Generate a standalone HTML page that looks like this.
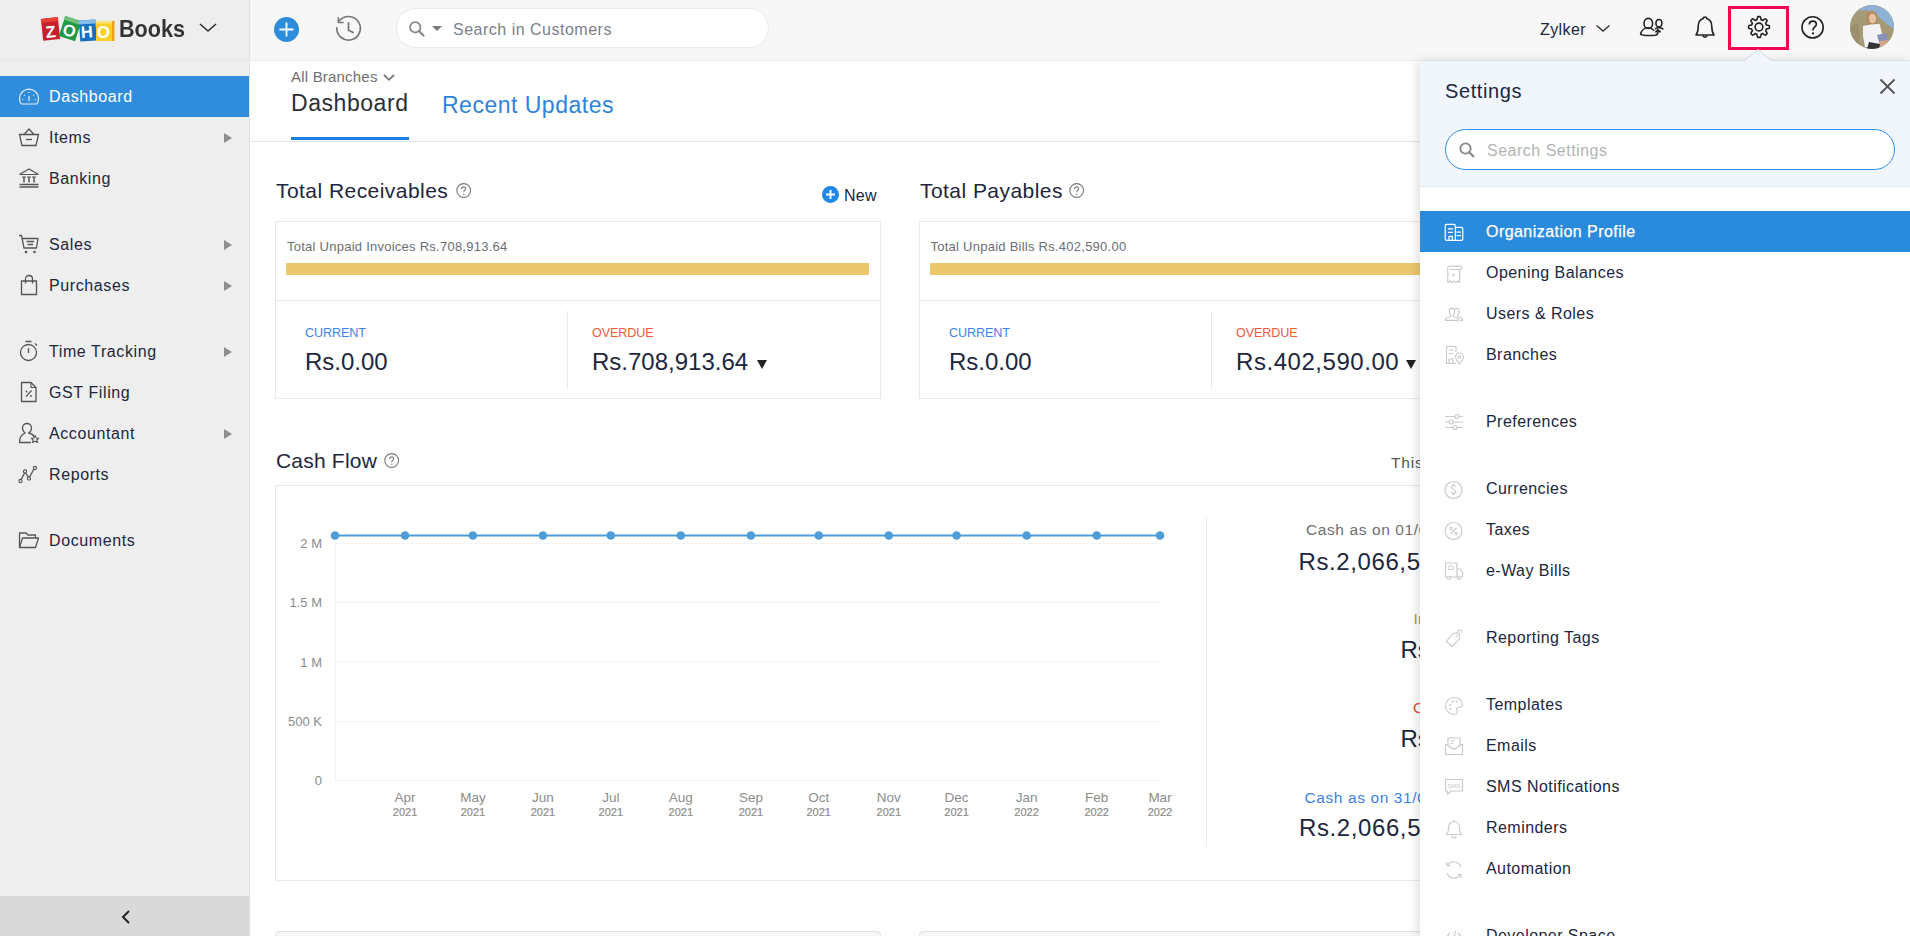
<!DOCTYPE html>
<html><head><meta charset="utf-8">
<style>
*{box-sizing:border-box;margin:0;padding:0}
html,body{width:1910px;height:936px;overflow:hidden;background:#fff;font-family:"Liberation Sans",sans-serif;color:#21263c}
.a{position:absolute;line-height:1;white-space:nowrap}
svg{position:absolute;overflow:visible}
#side{position:absolute;left:0;top:0;width:250px;height:936px;background:#eeeeee;border-right:1px solid #e2e2e2}
#sidehead{position:absolute;left:0;top:0;width:249px;height:61px;border-bottom:1px solid #e6e6e6}
.nav{position:absolute;left:0;width:249px;height:41px}
.nav .t{position:absolute;left:49px;top:13px;font-size:16px;line-height:16px;letter-spacing:0.6px;color:#21263c;white-space:nowrap}
.nav svg{left:18px;top:10px}
.nav .arr{position:absolute;left:224px;top:16px;width:0;height:0;border-left:8px solid #8e8e8e;border-top:5px solid transparent;border-bottom:5px solid transparent}
.nav.act{background:#2f8ddb}
.nav.act .t{color:#fff}
#collapse{position:absolute;left:0;top:896px;width:249px;height:40px;background:#d9d9d9}
#top{position:absolute;left:250px;top:0;width:1660px;height:61px;background:#f7f7f7;border-bottom:1px solid #ebebeb}
#main{position:absolute;left:250px;top:61px;width:1660px;height:875px;background:#fff}
#panel{position:absolute;left:1420px;top:61px;width:490px;height:875px;background:#fff;box-shadow:-3px 0 10px rgba(0,0,0,0.13)}
#phead{position:absolute;left:0;top:0;width:490px;height:126px;background:#f1f6fd;border-bottom:1px solid #e6e9ee}
.si{position:absolute;left:0;width:490px;height:41px}
.si .t{position:absolute;left:66px;top:13px;font-size:16px;line-height:16px;letter-spacing:0.45px;color:#21263c;white-space:nowrap}
.si svg{left:24px;top:11px}
.si.act{background:#2a8bdc}
.si.act .t{color:#fff;-webkit-text-stroke:0.25px #fff}
</style></head>
<body>
<div id="side">
  <div id="sidehead">
    <!-- zoho logo -->
    <svg style="left:41px;top:14px" width="76" height="28" viewBox="0 0 76 28">
      <g transform="rotate(-6 9 15)"><rect x="1" y="4" width="17" height="22" fill="#c8202f"/><rect x="1" y="4" width="17" height="4" fill="#e84235"/></g>
      <g transform="rotate(18 29 15)"><rect x="20.5" y="4" width="17" height="21" fill="#1f9a45"/><rect x="20.5" y="4" width="17" height="4" fill="#72bf80"/></g>
      <g transform="rotate(-4 47 16)"><rect x="38.5" y="6" width="16.5" height="21" fill="#1770c0"/><rect x="38.5" y="6" width="16.5" height="4" fill="#84bdea"/></g>
      <rect x="55" y="7" width="18" height="20" fill="#fcd02a"/><rect x="55" y="7" width="18" height="2.5" fill="#fde57a"/><rect x="71" y="7" width="2.5" height="20" fill="#eda21c"/>
      <g font-family="Liberation Sans" font-weight="700" font-size="16.5" fill="#fff" text-anchor="middle">
      <text x="9.5" y="23.5" transform="rotate(-6 9 15)">Z</text>
      <text x="28.8" y="22.3" transform="rotate(14 29 15)">O</text>
      <text x="45.8" y="23.5" transform="rotate(-4 47 16)">H</text>
      <text x="62.5" y="23.5">O</text></g>
    </svg>
    <div class="a" style="left:119px;top:17px;font-size:24px;font-weight:700;color:#333;transform:scaleX(0.9);transform-origin:0 0">Books</div>
    <svg style="left:199px;top:23px" width="18" height="9" viewBox="0 0 18 9"><path d="M1 1 L9 8 L17 1" fill="none" stroke="#333" stroke-width="1.6"/></svg>
  </div>
  <div class="nav act" style="top:76px"><svg style="left:18px;top:11px" width="22" height="19" viewBox="0 0 22 19"><path d="M3.2 17 A9.5 9.5 0 1 1 18.8 17 Z" fill="none" stroke="#e6f0fa" stroke-width="1.2" stroke-linejoin="round"/><path d="M11 5 V6 M6 8 L6.7 8.7 M16 8 L15.3 8.7 M4.2 12.5 H5.2 M16.8 12.5 H17.8 M11 9 V14" stroke="#e6f0fa" stroke-width="1.2"/></svg><span class="t">Dashboard</span></div>
  <div class="nav" style="top:117px"><svg style="left:18px;top:9px" width="22" height="22" viewBox="0 0 22 22"><path d="M1.5 8.5 H20.5 L18 19.5 H4 Z" fill="none" stroke="#555" stroke-width="1.3" stroke-linejoin="round"/><path d="M6 8.5 L11 3 L16 8.5" fill="none" stroke="#555" stroke-width="1.3"/><path d="M8 13.5 H14" stroke="#555" stroke-width="1.3"/></svg><span class="t">Items</span><span class="arr"></span></div>
  <div class="nav" style="top:158px"><svg style="left:18px;top:9px" width="22" height="22" viewBox="0 0 22 22"><path d="M1.5 7.5 L11 2 L20.5 7.5" fill="none" stroke="#555" stroke-width="1.3"/><path d="M2 7.5 H20" stroke="#555" stroke-width="1"/><path d="M6 10 V15.5 M11 10 V15.5 M16 10 V15.5" stroke="#555" stroke-width="1.5"/><path d="M4 10 H8 M9 10 H13 M14 10 H18" stroke="#555" stroke-width="1"/><path d="M1.5 17.5 H20.5 M1.5 20 H20.5" stroke="#555" stroke-width="1.3"/></svg><span class="t">Banking</span></div>
  <div class="nav" style="top:224px"><svg style="left:18px;top:9px" width="22" height="22" viewBox="0 0 22 22"><path d="M1 2.5 H3.5 L6 15 H18.5 L20 5.5 H4.5" fill="none" stroke="#555" stroke-width="1.3" stroke-linejoin="round"/><path d="M8.5 8.5 H16 M9.5 11.5 H15" stroke="#555" stroke-width="1.3"/><circle cx="8" cy="19" r="1.3" fill="#555"/><circle cx="16.5" cy="19" r="1.3" fill="#555"/></svg><span class="t">Sales</span><span class="arr"></span></div>
  <div class="nav" style="top:265px"><svg style="left:18px;top:9px" width="22" height="22" viewBox="0 0 22 22"><path d="M3.5 7 H18.5 V20.5 H3.5 Z" fill="none" stroke="#555" stroke-width="1.3"/><path d="M7.5 9.5 V5 C7.5 3 9 1.5 11 1.5 C13 1.5 14.5 3 14.5 5 V9.5" fill="none" stroke="#555" stroke-width="1.3"/></svg><span class="t">Purchases</span><span class="arr"></span></div>
  <div class="nav" style="top:331px"><svg style="left:18px;top:9px" width="22" height="22" viewBox="0 0 22 22"><circle cx="10.5" cy="12.5" r="8" fill="none" stroke="#555" stroke-width="1.3"/><path d="M7.5 1.5 H13.5 M10.5 8 V13 M17 3.5 L19 5.5" stroke="#555" stroke-width="1.3"/></svg><span class="t">Time Tracking</span><span class="arr"></span></div>
  <div class="nav" style="top:372px"><svg style="left:18px;top:9px" width="22" height="22" viewBox="0 0 22 22"><path d="M3.5 1.5 H13 L18 6.5 V20.5 H3.5 Z" fill="none" stroke="#555" stroke-width="1.3" stroke-linejoin="round"/><path d="M13 1.5 V6.5 H18" fill="none" stroke="#555" stroke-width="1.1"/><path d="M8 15.5 L13.5 9.5" stroke="#555" stroke-width="1.2"/><circle cx="8.5" cy="10.5" r="0.9" fill="#555"/><circle cx="13" cy="15" r="0.9" fill="#555"/></svg><span class="t">GST Filing</span></div>
  <div class="nav" style="top:413px"><svg style="left:18px;top:9px" width="22" height="22" viewBox="0 0 22 22"><path d="M7.5 11 C5.5 10 4.5 8 4.5 6 C4.5 3.3 6.5 1.5 9 1.5 C11.5 1.5 13.5 3.3 13.5 6 C13.5 8 12.5 10 10.5 11 C14 11.5 15.5 13 16 15 M13 20.5 H1.5 C1.5 15 4 12 7.5 11" fill="none" stroke="#555" stroke-width="1.3" stroke-linejoin="round"/><path d="M17 13.5 L18.2 16 L20.8 16.2 L18.8 18 L19.5 20.5 L17 19.2 L14.5 20.5 L15.2 18 L13.2 16.2 L15.8 16 Z" fill="none" stroke="#555" stroke-width="1.1" stroke-linejoin="round"/></svg><span class="t">Accountant</span><span class="arr"></span></div>
  <div class="nav" style="top:454px"><svg style="left:18px;top:9px" width="22" height="22" viewBox="0 0 22 22"><path d="M3 17 L7 9 L11 15 L16 6" fill="none" stroke="#555" stroke-width="1.3"/><circle cx="2.5" cy="18" r="1.6" fill="#eee" stroke="#555" stroke-width="1.1"/><circle cx="7" cy="8.5" r="1.6" fill="#eee" stroke="#555" stroke-width="1.1"/><circle cx="11" cy="15.5" r="1.6" fill="#eee" stroke="#555" stroke-width="1.1"/><circle cx="17" cy="5" r="1.6" fill="#eee" stroke="#555" stroke-width="1.1"/></svg><span class="t">Reports</span></div>
  <div class="nav" style="top:520px"><svg style="left:18px;top:9px" width="22" height="22" viewBox="0 0 22 22"><path d="M1.5 18.5 V4 H8 L10 6 H17.5 V9" fill="none" stroke="#555" stroke-width="1.3" stroke-linejoin="round"/><path d="M1.5 18.5 L4.5 9 H20.5 L17.5 18.5 Z" fill="none" stroke="#555" stroke-width="1.3" stroke-linejoin="round"/></svg><span class="t">Documents</span></div>
  <div id="collapse">
    <svg style="left:121px;top:14px" width="10" height="14" viewBox="0 0 10 14"><path d="M8 1 L2 7 L8 13" fill="none" stroke="#222" stroke-width="2"/></svg>
  </div>
</div>

<div id="top"></div>
<!-- topbar content -->
<svg style="left:274px;top:17px" width="25" height="25" viewBox="0 0 25 25"><circle cx="12.5" cy="12.5" r="12.5" fill="#2e8ddb"/><path d="M12.5 5.5 V19.5 M5.5 12.5 H19.5" stroke="#fff" stroke-width="1.8"/></svg>
<svg style="left:332px;top:12px" width="34" height="34" viewBox="0 0 34 34"><g fill="none" stroke="#767676" stroke-width="1.7"><path d="M7.2 9.1 A11.8 11.8 0 1 1 4.8 15.2"/><path d="M6.4 5.2 V10.5 H11.7"/><path d="M16.5 10.3 V18.3 L21.7 20.8"/></g></svg>
<div style="position:absolute;left:396px;top:8px;width:373px;height:40px;border-radius:20px;background:#fff;border:1px solid #ececec"></div>
<svg style="left:409px;top:21px" width="16" height="16" viewBox="0 0 16 16"><circle cx="6.3" cy="6.3" r="5.2" fill="none" stroke="#888" stroke-width="1.8"/><path d="M10 10 L14.5 14.5" stroke="#888" stroke-width="2.2" stroke-linecap="round"/></svg>
<svg style="left:432px;top:26px" width="10" height="5" viewBox="0 0 10 5"><path d="M0 0 H10 L5 5 Z" fill="#777"/></svg>
<div class="a" style="left:453px;top:21.5px;font-size:16px;color:#7a7f8a;letter-spacing:0.5px">Search in Customers</div>
<div class="a" style="left:1540px;top:21.5px;font-size:16px;color:#21263c;letter-spacing:0.4px">Zylker</div>
<svg style="left:1596px;top:25px" width="14" height="7" viewBox="0 0 14 7"><path d="M0.5 0.5 L7 6 L13.5 0.5" fill="none" stroke="#333" stroke-width="1.4"/></svg>
<svg style="left:1638px;top:17px" width="28" height="22" viewBox="0 0 28 22"><g fill="none" stroke="#222" stroke-width="1.6" stroke-linecap="round" stroke-linejoin="round"><ellipse cx="10.3" cy="6.4" rx="4.3" ry="5"/><path d="M15.8 13.3 C14 11.5 12 10.8 10.2 10.8 C6 10.8 3.2 14 2.6 17.4 C5 18.6 10 18.8 17 18.3 C19.2 18 20 16.5 20 14.2"/><ellipse cx="20.9" cy="6.2" rx="3" ry="3.7"/><path d="M17.6 11.6 C19 10.4 23 10.3 24.8 11.9"/><path d="M17.8 14.8 L20 12.8 L22.2 14.8"/></g></svg>
<svg style="left:1694px;top:15px" width="22" height="25" viewBox="0 0 22 25"><path d="M2 20 C3.5 18 4.2 16.5 4.2 11.5 C4.2 7.3 6.3 4.6 9.3 3.6 C9.2 1.4 12.8 1.4 12.7 3.6 C15.7 4.6 17.8 7.3 17.8 11.5 C17.8 16.5 18.5 18 20 20 Z" fill="none" stroke="#222" stroke-width="1.6" stroke-linejoin="round"/><path d="M8.8 20.5 A2.3 2.3 0 0 0 13.2 20.5" fill="none" stroke="#222" stroke-width="1.5"/></svg>
<div style="position:absolute;left:1728px;top:6px;width:61px;height:44px;border:3px solid #f5054f"></div>
<svg style="left:1747px;top:15.2px" width="24" height="24" viewBox="0 0 24 24"><path d="M22.40 12.00 L22.40 12.27 L22.39 12.54 L22.37 12.82 L22.34 13.09 L22.10 13.33 L21.59 13.52 L21.05 13.68 L20.50 13.81 L19.96 13.91 L19.45 14.00 L19.19 14.13 L19.13 14.32 L19.07 14.50 L19.00 14.69 L18.93 14.87 L18.85 15.05 L18.77 15.23 L18.68 15.40 L18.59 15.58 L18.68 15.86 L18.98 16.28 L19.29 16.73 L19.59 17.22 L19.86 17.71 L20.08 18.20 L20.08 18.54 L19.91 18.75 L19.73 18.96 L19.54 19.16 L19.35 19.35 L19.16 19.54 L18.96 19.73 L18.75 19.91 L18.54 20.08 L18.20 20.08 L17.71 19.86 L17.22 19.59 L16.73 19.29 L16.28 18.98 L15.86 18.68 L15.58 18.59 L15.40 18.68 L15.23 18.77 L15.05 18.85 L14.87 18.93 L14.69 19.00 L14.50 19.07 L14.32 19.13 L14.13 19.19 L14.00 19.45 L13.91 19.96 L13.81 20.50 L13.68 21.05 L13.52 21.59 L13.33 22.10 L13.09 22.34 L12.82 22.37 L12.54 22.39 L12.27 22.40 L12.00 22.40 L11.73 22.40 L11.46 22.39 L11.18 22.37 L10.91 22.34 L10.67 22.10 L10.48 21.59 L10.32 21.05 L10.19 20.50 L10.09 19.96 L10.00 19.45 L9.87 19.19 L9.68 19.13 L9.50 19.07 L9.31 19.00 L9.13 18.93 L8.95 18.85 L8.77 18.77 L8.60 18.68 L8.42 18.59 L8.14 18.68 L7.72 18.98 L7.27 19.29 L6.78 19.59 L6.29 19.86 L5.80 20.08 L5.46 20.08 L5.25 19.91 L5.04 19.73 L4.84 19.54 L4.65 19.35 L4.46 19.16 L4.27 18.96 L4.09 18.75 L3.92 18.54 L3.92 18.20 L4.14 17.71 L4.41 17.22 L4.71 16.73 L5.02 16.28 L5.32 15.86 L5.41 15.58 L5.32 15.40 L5.23 15.23 L5.15 15.05 L5.07 14.87 L5.00 14.69 L4.93 14.50 L4.87 14.32 L4.81 14.13 L4.55 14.00 L4.04 13.91 L3.50 13.81 L2.95 13.68 L2.41 13.52 L1.90 13.33 L1.66 13.09 L1.63 12.82 L1.61 12.54 L1.60 12.27 L1.60 12.00 L1.60 11.73 L1.61 11.46 L1.63 11.18 L1.66 10.91 L1.90 10.67 L2.41 10.48 L2.95 10.32 L3.50 10.19 L4.04 10.09 L4.55 10.00 L4.81 9.87 L4.87 9.68 L4.93 9.50 L5.00 9.31 L5.07 9.13 L5.15 8.95 L5.23 8.77 L5.32 8.60 L5.41 8.42 L5.32 8.14 L5.02 7.72 L4.71 7.27 L4.41 6.78 L4.14 6.29 L3.92 5.80 L3.92 5.46 L4.09 5.25 L4.27 5.04 L4.46 4.84 L4.65 4.65 L4.84 4.46 L5.04 4.27 L5.25 4.09 L5.46 3.92 L5.80 3.92 L6.29 4.14 L6.78 4.41 L7.27 4.71 L7.72 5.02 L8.14 5.32 L8.42 5.41 L8.60 5.32 L8.77 5.23 L8.95 5.15 L9.13 5.07 L9.31 5.00 L9.50 4.93 L9.68 4.87 L9.87 4.81 L10.00 4.55 L10.09 4.04 L10.19 3.50 L10.32 2.95 L10.48 2.41 L10.67 1.90 L10.91 1.66 L11.18 1.63 L11.46 1.61 L11.73 1.60 L12.00 1.60 L12.27 1.60 L12.54 1.61 L12.82 1.63 L13.09 1.66 L13.33 1.90 L13.52 2.41 L13.68 2.95 L13.81 3.50 L13.91 4.04 L14.00 4.55 L14.13 4.81 L14.32 4.87 L14.50 4.93 L14.69 5.00 L14.87 5.07 L15.05 5.15 L15.23 5.23 L15.40 5.32 L15.58 5.41 L15.86 5.32 L16.28 5.02 L16.73 4.71 L17.22 4.41 L17.71 4.14 L18.20 3.92 L18.54 3.92 L18.75 4.09 L18.96 4.27 L19.16 4.46 L19.35 4.65 L19.54 4.84 L19.73 5.04 L19.91 5.25 L20.08 5.46 L20.08 5.80 L19.86 6.29 L19.59 6.78 L19.29 7.27 L18.98 7.72 L18.68 8.14 L18.59 8.42 L18.68 8.60 L18.77 8.77 L18.85 8.95 L18.93 9.13 L19.00 9.31 L19.07 9.50 L19.13 9.68 L19.19 9.87 L19.45 10.00 L19.96 10.09 L20.50 10.19 L21.05 10.32 L21.59 10.48 L22.10 10.67 L22.34 10.91 L22.37 11.18 L22.39 11.46 L22.40 11.73Z" fill="none" stroke="#222" stroke-width="1.6" stroke-linejoin="round"/><circle cx="12" cy="12" r="3.9" fill="none" stroke="#222" stroke-width="1.6"/></svg>
<svg style="left:1801px;top:16px" width="24" height="24" viewBox="0 0 24 24"><circle cx="11.6" cy="11.4" r="10.6" fill="none" stroke="#222" stroke-width="1.6"/><path d="M8.3 8.6 C8.3 6.3 10 5.2 11.8 5.2 C13.8 5.2 15.3 6.5 15.3 8.4 C15.3 10.6 12.2 11.2 12 13.8 V14.5" fill="none" stroke="#222" stroke-width="1.7"/><circle cx="12" cy="17.4" r="1.1" fill="#222"/></svg>
<svg style="left:1850px;top:5.4px" width="44" height="44" viewBox="0 0 44 44"><defs><clipPath id="avc"><circle cx="22" cy="22" r="22"/></clipPath><filter id="avb"><feGaussianBlur stdDeviation="0.7"/></filter></defs><g clip-path="url(#avc)"><rect width="44" height="44" fill="#a49a76"/><g filter="url(#avb)"><path d="M8 0 H44 V24 L38 20 L31 14 L26 9 L16 5 L10 6 Z" fill="#8fb1d4"/><path d="M0 22 L8 18 L10 30 L6 44 H0 Z" fill="#9a9070"/><path d="M16 8 C18 5 25 5 27 9 L27.5 22 L16.5 22 Z" fill="#b48b62"/><ellipse cx="22.5" cy="13.5" rx="3.6" ry="4.8" fill="#e3c2a2"/><path d="M13 21 L21 19.5 L29.5 19 L32 28 L31.5 38 L22 42 L15 42 L13 31 Z" fill="#f3f3f6"/><path d="M27 30 L36 28 L39 36 L30 40 Z" fill="#8692b6"/><path d="M19 37 L30 39 L29 44 L17 44 Z" fill="#343438"/><path d="M30 36 L38 35 L38 41 L30 41 Z" fill="#d7a48a"/></g></g></svg>

<div id="main"></div>
<!-- tabs -->
<div class="a" style="left:291px;top:69px;font-size:15px;color:#6f6f6f;letter-spacing:0.2px">All Branches</div>
<svg style="left:383px;top:74px" width="12" height="7" viewBox="0 0 12 7"><path d="M1 1 L6 5.8 L11 1" fill="none" stroke="#777" stroke-width="1.8"/></svg>
<div class="a" style="left:291px;top:91.5px;font-size:23px;color:#2c2f36;letter-spacing:0.55px">Dashboard</div>
<div class="a" style="left:442px;top:94px;font-size:23px;color:#2f82dc;letter-spacing:0.5px">Recent Updates</div>
<div style="position:absolute;left:291px;top:137px;width:118px;height:3px;background:#1b7ee0"></div>
<div style="position:absolute;left:250px;top:141px;width:1170px;height:1px;background:#e6e6e6"></div>

<!-- receivables -->
<div class="a" style="left:276px;top:179.5px;font-size:21px;color:#21263c;letter-spacing:0.45px">Total Receivables</div>
<svg style="left:455.5px;top:183px" width="16" height="16" viewBox="0 0 16 16"><circle cx="7.7" cy="7.5" r="6.9" fill="none" stroke="#777" stroke-width="1.1"/><path d="M5.7 5.9 C5.7 4.6 6.6 3.9 7.7 3.9 C8.9 3.9 9.7 4.7 9.7 5.7 C9.7 7 8 7.3 7.8 8.8 V9.2" fill="none" stroke="#777" stroke-width="1.1"/><circle cx="7.8" cy="11.2" r="0.7" fill="#777"/></svg>
<svg style="left:821.5px;top:186px" width="17" height="17" viewBox="0 0 17 17"><circle cx="8.5" cy="8.5" r="8.5" fill="#1f87e5"/><path d="M8.5 4 V13 M4 8.5 H13" stroke="#fff" stroke-width="2"/></svg>
<div class="a" style="left:844px;top:187.5px;font-size:16px;color:#21263c;letter-spacing:0.3px">New</div>
<div style="position:absolute;left:275px;top:221px;width:606px;height:178px;border:1px solid #e8e8e8"></div>
<div style="position:absolute;left:276px;top:300px;width:604px;height:1px;background:#e8e8e8"></div>
<div class="a" style="left:287px;top:240px;font-size:13px;color:#6b6e76;letter-spacing:0.25px">Total Unpaid Invoices Rs.708,913.64</div>
<div style="position:absolute;left:286px;top:263px;width:583px;height:12px;background:#ebc86c"></div>
<div class="a" style="left:305px;top:327px;font-size:12.6px;color:#3d84ee;letter-spacing:-0.1px">CURRENT</div>
<div class="a" style="left:305px;top:350px;font-size:24px;color:#21263c">Rs.0.00</div>
<div style="position:absolute;left:567px;top:311px;width:1px;height:77px;background:#e8e8e8"></div>
<div class="a" style="left:592px;top:327px;font-size:12.6px;color:#f2583b;letter-spacing:-0.1px">OVERDUE</div>
<div class="a" style="left:592px;top:350px;font-size:24px;color:#21263c">Rs.708,913.64</div>
<svg style="left:757px;top:359.5px" width="10" height="9" viewBox="0 0 10 9"><path d="M0 0 H10 L5 9 Z" fill="#222"/></svg>

<!-- payables -->
<div class="a" style="left:920px;top:179.5px;font-size:21px;color:#21263c;letter-spacing:0.45px">Total Payables</div>
<svg style="left:1068.5px;top:183px" width="16" height="16" viewBox="0 0 16 16"><circle cx="7.7" cy="7.5" r="6.9" fill="none" stroke="#777" stroke-width="1.1"/><path d="M5.7 5.9 C5.7 4.6 6.6 3.9 7.7 3.9 C8.9 3.9 9.7 4.7 9.7 5.7 C9.7 7 8 7.3 7.8 8.8 V9.2" fill="none" stroke="#777" stroke-width="1.1"/><circle cx="7.8" cy="11.2" r="0.7" fill="#777"/></svg>
<div style="position:absolute;left:919px;top:221px;width:606px;height:178px;border:1px solid #e8e8e8"></div>
<div style="position:absolute;left:920px;top:300px;width:604px;height:1px;background:#e8e8e8"></div>
<div class="a" style="left:930.5px;top:240px;font-size:13px;color:#6b6e76;letter-spacing:0.25px">Total Unpaid Bills Rs.402,590.00</div>
<div style="position:absolute;left:930px;top:263px;width:583px;height:12px;background:#ebc86c"></div>
<div class="a" style="left:949px;top:327px;font-size:12.6px;color:#3d84ee;letter-spacing:-0.1px">CURRENT</div>
<div class="a" style="left:949px;top:350px;font-size:24px;color:#21263c">Rs.0.00</div>
<div style="position:absolute;left:1211px;top:311px;width:1px;height:77px;background:#e8e8e8"></div>
<div class="a" style="left:1236px;top:327px;font-size:12.6px;color:#f2583b;letter-spacing:-0.1px">OVERDUE</div>
<div class="a" style="left:1236px;top:350px;font-size:24px;color:#21263c;letter-spacing:0.55px">Rs.402,590.00</div>
<svg style="left:1406px;top:359.5px" width="10" height="9" viewBox="0 0 10 9"><path d="M0 0 H10 L5 9 Z" fill="#222"/></svg>

<!-- cash flow -->
<div class="a" style="left:276px;top:449.5px;font-size:21px;color:#21263c;letter-spacing:0.2px">Cash Flow</div>
<svg style="left:384px;top:453px" width="16" height="16" viewBox="0 0 16 16"><circle cx="7.7" cy="7.5" r="6.9" fill="none" stroke="#777" stroke-width="1.1"/><path d="M5.7 5.9 C5.7 4.6 6.6 3.9 7.7 3.9 C8.9 3.9 9.7 4.7 9.7 5.7 C9.7 7 8 7.3 7.8 8.8 V9.2" fill="none" stroke="#777" stroke-width="1.1"/><circle cx="7.8" cy="11.2" r="0.7" fill="#777"/></svg>
<div class="a" style="left:1391px;top:455px;font-size:15.5px;color:#555;letter-spacing:0.8px">This Fiscal Year</div>
<div style="position:absolute;left:275px;top:485px;width:1250px;height:396px;border:1px solid #e8e8e8"></div>
<div style="position:absolute;left:1206px;top:517px;width:1px;height:330px;background:#ebebeb"></div>
<svg style="left:0;top:0" width="1910" height="936" viewBox="0 0 1910 936" id="chart"><path d="M335 602.5 H1160" stroke="#f2f2f2" stroke-width="1"/><path d="M335 662 H1160" stroke="#f2f2f2" stroke-width="1"/><path d="M335 721.5 H1160" stroke="#f2f2f2" stroke-width="1"/><path d="M335 780.5 H1160" stroke="#f2f2f2" stroke-width="1"/><path d="M335 543.5 H1160" stroke="#ececec" stroke-width="1" stroke-dasharray="2 2"/><path d="M335.5 535 V780" stroke="#f4f4f4" stroke-width="1"/><text x="322" y="548.0" text-anchor="end" font-family="Liberation Sans" font-size="13" fill="#8c8c8c">2 M</text><text x="322" y="607.0" text-anchor="end" font-family="Liberation Sans" font-size="13" fill="#8c8c8c">1.5 M</text><text x="322" y="666.5" text-anchor="end" font-family="Liberation Sans" font-size="13" fill="#8c8c8c">1 M</text><text x="322" y="726.0" text-anchor="end" font-family="Liberation Sans" font-size="13" fill="#8c8c8c">500 K</text><text x="322" y="785.0" text-anchor="end" font-family="Liberation Sans" font-size="13" fill="#8c8c8c">0</text><text x="405.1" y="801.5" text-anchor="middle" font-family="Liberation Sans" font-size="13.5" fill="#8c8c8c">Apr</text><text x="405.1" y="815.5" text-anchor="middle" font-family="Liberation Sans" font-size="11" fill="#8c8c8c" stroke="#8c8c8c" stroke-width="0.2">2021</text><text x="472.9" y="801.5" text-anchor="middle" font-family="Liberation Sans" font-size="13.5" fill="#8c8c8c">May</text><text x="472.9" y="815.5" text-anchor="middle" font-family="Liberation Sans" font-size="11" fill="#8c8c8c" stroke="#8c8c8c" stroke-width="0.2">2021</text><text x="542.9" y="801.5" text-anchor="middle" font-family="Liberation Sans" font-size="13.5" fill="#8c8c8c">Jun</text><text x="542.9" y="815.5" text-anchor="middle" font-family="Liberation Sans" font-size="11" fill="#8c8c8c" stroke="#8c8c8c" stroke-width="0.2">2021</text><text x="610.8" y="801.5" text-anchor="middle" font-family="Liberation Sans" font-size="13.5" fill="#8c8c8c">Jul</text><text x="610.8" y="815.5" text-anchor="middle" font-family="Liberation Sans" font-size="11" fill="#8c8c8c" stroke="#8c8c8c" stroke-width="0.2">2021</text><text x="680.8" y="801.5" text-anchor="middle" font-family="Liberation Sans" font-size="13.5" fill="#8c8c8c">Aug</text><text x="680.8" y="815.5" text-anchor="middle" font-family="Liberation Sans" font-size="11" fill="#8c8c8c" stroke="#8c8c8c" stroke-width="0.2">2021</text><text x="750.9" y="801.5" text-anchor="middle" font-family="Liberation Sans" font-size="13.5" fill="#8c8c8c">Sep</text><text x="750.9" y="815.5" text-anchor="middle" font-family="Liberation Sans" font-size="11" fill="#8c8c8c" stroke="#8c8c8c" stroke-width="0.2">2021</text><text x="818.7" y="801.5" text-anchor="middle" font-family="Liberation Sans" font-size="13.5" fill="#8c8c8c">Oct</text><text x="818.7" y="815.5" text-anchor="middle" font-family="Liberation Sans" font-size="11" fill="#8c8c8c" stroke="#8c8c8c" stroke-width="0.2">2021</text><text x="888.8" y="801.5" text-anchor="middle" font-family="Liberation Sans" font-size="13.5" fill="#8c8c8c">Nov</text><text x="888.8" y="815.5" text-anchor="middle" font-family="Liberation Sans" font-size="11" fill="#8c8c8c" stroke="#8c8c8c" stroke-width="0.2">2021</text><text x="956.6" y="801.5" text-anchor="middle" font-family="Liberation Sans" font-size="13.5" fill="#8c8c8c">Dec</text><text x="956.6" y="815.5" text-anchor="middle" font-family="Liberation Sans" font-size="11" fill="#8c8c8c" stroke="#8c8c8c" stroke-width="0.2">2021</text><text x="1026.6" y="801.5" text-anchor="middle" font-family="Liberation Sans" font-size="13.5" fill="#8c8c8c">Jan</text><text x="1026.6" y="815.5" text-anchor="middle" font-family="Liberation Sans" font-size="11" fill="#8c8c8c" stroke="#8c8c8c" stroke-width="0.2">2022</text><text x="1096.7" y="801.5" text-anchor="middle" font-family="Liberation Sans" font-size="13.5" fill="#8c8c8c">Feb</text><text x="1096.7" y="815.5" text-anchor="middle" font-family="Liberation Sans" font-size="11" fill="#8c8c8c" stroke="#8c8c8c" stroke-width="0.2">2022</text><text x="1160.0" y="801.5" text-anchor="middle" font-family="Liberation Sans" font-size="13.5" fill="#8c8c8c">Mar</text><text x="1160.0" y="815.5" text-anchor="middle" font-family="Liberation Sans" font-size="11" fill="#8c8c8c" stroke="#8c8c8c" stroke-width="0.2">2022</text><path d="M335 535.5 H1160" stroke="#4e9dd8" stroke-width="1.8"/><circle cx="335.00" cy="535.5" r="4.3" fill="#4e9dd8"/><circle cx="405.07" cy="535.5" r="4.3" fill="#4e9dd8"/><circle cx="472.88" cy="535.5" r="4.3" fill="#4e9dd8"/><circle cx="542.95" cy="535.5" r="4.3" fill="#4e9dd8"/><circle cx="610.75" cy="535.5" r="4.3" fill="#4e9dd8"/><circle cx="680.82" cy="535.5" r="4.3" fill="#4e9dd8"/><circle cx="750.89" cy="535.5" r="4.3" fill="#4e9dd8"/><circle cx="818.70" cy="535.5" r="4.3" fill="#4e9dd8"/><circle cx="888.77" cy="535.5" r="4.3" fill="#4e9dd8"/><circle cx="956.58" cy="535.5" r="4.3" fill="#4e9dd8"/><circle cx="1026.64" cy="535.5" r="4.3" fill="#4e9dd8"/><circle cx="1096.71" cy="535.5" r="4.3" fill="#4e9dd8"/><circle cx="1160.00" cy="535.5" r="4.3" fill="#4e9dd8"/></svg>
<div class="a" style="left:1306px;top:522px;font-size:15.5px;color:#6f6f6f;letter-spacing:0.6px">Cash as on 01/04/2021</div>
<div class="a" style="left:1298.5px;top:550px;font-size:24px;color:#21263c;letter-spacing:0.6px">Rs.2,066,593.00</div>
<div class="a" style="left:1413.5px;top:611px;font-size:15.5px;color:#a8a71d;letter-spacing:0.3px">Incoming</div>
<div class="a" style="left:1400.5px;top:638px;font-size:24px;color:#21263c">Rs.0.00</div>
<div class="a" style="left:1413px;top:700px;font-size:15.5px;color:#e04a3a;letter-spacing:0.3px">Outgoing</div>
<div class="a" style="left:1400.5px;top:727px;font-size:24px;color:#21263c">Rs.0.00</div>
<div class="a" style="left:1304.5px;top:790px;font-size:15.5px;color:#3b82e6;letter-spacing:0.6px">Cash as on 31/03/2022</div>
<div class="a" style="left:1299px;top:816px;font-size:24px;color:#21263c;letter-spacing:0.6px">Rs.2,066,593.00</div>

<!-- bottom cards -->
<div style="position:absolute;left:275px;top:931px;width:606px;height:20px;border:1px solid #e0e0e0;border-radius:4px;background:#f7f7f7"></div>
<div style="position:absolute;left:919px;top:931px;width:606px;height:20px;border:1px solid #e0e0e0;border-radius:4px;background:#f7f7f7"></div>

<div id="panel">
  <div id="phead">
    <div class="a" style="left:25px;top:20px;font-size:20px;color:#21263c;letter-spacing:0.6px">Settings</div>
    <svg style="left:459px;top:17px" width="17" height="17" viewBox="0 0 17 17"><path d="M1.5 1.5 L15.5 15.5 M15.5 1.5 L1.5 15.5" stroke="#555" stroke-width="1.9"/></svg>
    <div style="position:absolute;left:25px;top:68px;width:450px;height:41px;border-radius:21px;background:#fff;border:1.5px solid #2c8ef2"></div>
    <svg style="left:39px;top:81px" width="16" height="16" viewBox="0 0 16 16"><circle cx="6.5" cy="6.5" r="5.2" fill="none" stroke="#888" stroke-width="1.8"/><path d="M10.2 10.2 L14.3 14.3" stroke="#888" stroke-width="2.2" stroke-linecap="round"/></svg>
    <div class="a" style="left:67px;top:81.5px;font-size:16px;color:#b3b3b3;letter-spacing:0.5px">Search Settings</div>
  </div>
<div class="si act" style="top:150px"><svg style="left:24px;top:12px" width="20" height="19" viewBox="0 0 20 19"><g fill="none" stroke="#fff" stroke-width="1.2" stroke-linejoin="round"><path d="M2.7 1.4 H9.8 Q11.3 1.4 11.3 2.9 V17.4 H2.7 Q1.2 17.4 1.2 15.9 V2.9 Q1.2 1.4 2.7 1.4 Z"/><path d="M11.3 4.3 H17.3 Q18.8 4.3 18.8 5.8 V15.9 Q18.8 17.4 17.3 17.4 H11.3"/><path d="M3.9 5.8 H9 M3.9 9.4 H9 M12.5 9.2 H17 M12.5 12.6 H17"/><path d="M5 17.4 V13.3 H8.3 V17.4"/></g></svg><span class="t">Organization Profile</span></div>
<div class="si" style="top:191px"><svg style="left:27px;top:13px" width="16" height="19" viewBox="0 0 16 19"><g fill="none" stroke="#c9c9c9" stroke-width="1.1" stroke-linejoin="round"><path d="M0.8 2.8 V17.5 L2.8 15.8 L4.8 17.5 L6.8 15.8 L8.8 17.5 L10.8 15.8 L12.6 17.5 V4.5"/><path d="M2.5 1.1 H13 A1.7 1.7 0 0 1 13 4.5 H2.6"/><path d="M2.5 1.1 A1.7 1.7 0 0 0 0.8 2.8"/><path d="M6.7 8.5 V11.5 M5.2 10 H8.2"/></g></svg><span class="t">Opening Balances</span></div>
<div class="si" style="top:232px"><svg style="left:24px;top:12px" width="20" height="18" viewBox="0 0 20 18"><g fill="none" stroke="#c9c9c9" stroke-width="1.15" stroke-linejoin="round"><path d="M7.9 3.4 C5.8 3.4 5.2 5 5.3 6.8 C5.4 8.7 6.2 9.8 6.9 10.3 C7.1 11.2 6.5 11.6 5.2 12 C2.5 12.7 1.3 13.8 1.3 15.3 H14.6 C14.6 13.8 13.2 12.7 10.8 12 C9.5 11.6 8.9 11.2 9.1 10.3 C9.9 9.8 10.5 8.7 10.6 6.8 C10.7 5 10 3.4 7.9 3.4 Z"/><path d="M10.9 4.3 C11.3 3.7 12 3.4 12.8 3.4 C14.5 3.4 15.2 5 15.1 6.8 C15 8.7 14.3 9.8 13.6 10.3 C13.4 11.2 14 11.6 15.2 12 C17.5 12.7 18.7 13.8 18.7 15.3 H16"/></g></svg><span class="t">Users &amp; Roles</span></div>
<div class="si" style="top:273px"><svg style="left:25px;top:11px" width="20" height="20" viewBox="0 0 20 20"><path d="M11 18.5 H1.5 V1.5 H11 V7" fill="none" stroke="#c9c9c9" stroke-width="1.15"/><path d="M4 5 H8 M4 8.5 H8 M4 18.5 V14 H8 V18.5" fill="none" stroke="#c9c9c9" stroke-width="1.2"/><path d="M14.5 19 C12 16 10.5 14 10.5 12 A4 4 0 0 1 18.5 12 C18.5 14 17 16 14.5 19 Z" fill="none" stroke="#c9c9c9" stroke-width="1.15"/><circle cx="14.5" cy="12" r="1.3" fill="none" stroke="#c9c9c9" stroke-width="1.1"/></svg><span class="t">Branches</span></div>
<div class="si" style="top:340px"><svg style="left:24px;top:13px" width="20" height="16" viewBox="0 0 20 16"><path d="M1 2.5 H11 M15 2.5 H19 M1 8 H5 M9 8 H19 M1 13.5 H9 M13 13.5 H19" stroke="#c9c9c9" stroke-width="1.15"/><circle cx="13" cy="2.5" r="2" fill="none" stroke="#c9c9c9" stroke-width="1.2"/><circle cx="7" cy="8" r="2" fill="none" stroke="#c9c9c9" stroke-width="1.2"/><circle cx="11" cy="13.5" r="2" fill="none" stroke="#c9c9c9" stroke-width="1.2"/></svg><span class="t">Preferences</span></div>
<div class="si" style="top:407px"><svg style="left:24px;top:12px" width="20" height="20" viewBox="0 0 20 20"><circle cx="9.5" cy="10" r="8.5" fill="none" stroke="#c9c9c9" stroke-width="1.15"/><path d="M11.7 7 C11.3 6 10.5 5.5 9.5 5.5 C8.3 5.5 7.4 6.2 7.4 7.3 C7.4 9.8 11.8 8.8 11.8 11.6 C11.8 12.8 10.8 13.6 9.5 13.6 C8.3 13.6 7.4 13 7.1 12 M9.5 4 V5.5 M9.5 13.6 V15.5" fill="none" stroke="#c9c9c9" stroke-width="1.2"/></svg><span class="t">Currencies</span></div>
<div class="si" style="top:448px"><svg style="left:24px;top:12px" width="20" height="20" viewBox="0 0 20 20"><circle cx="9.5" cy="10" r="8.5" fill="none" stroke="#c9c9c9" stroke-width="1.15"/><path d="M6.5 13 L12.5 7" stroke="#c9c9c9" stroke-width="1.15"/><circle cx="7" cy="7.5" r="1.3" fill="none" stroke="#c9c9c9" stroke-width="1.1"/><circle cx="12" cy="12.5" r="1.3" fill="none" stroke="#c9c9c9" stroke-width="1.1"/></svg><span class="t">Taxes</span></div>
<div class="si" style="top:489px"><svg style="left:24px;top:11px" width="20" height="20" viewBox="0 0 20 20"><path d="M13 16 H1.5 V2 H13 V16 M13 8 H16 L18.5 11.5 V16 H17" fill="none" stroke="#c9c9c9" stroke-width="1.15"/><circle cx="5" cy="17" r="1.5" fill="#fff" stroke="#c9c9c9" stroke-width="1.2"/><circle cx="15" cy="17" r="1.5" fill="#fff" stroke="#c9c9c9" stroke-width="1.2"/><path d="M4.5 8 A2.5 2.5 0 1 1 9 8.5 H4.5" fill="none" stroke="#c9c9c9" stroke-width="1"/></svg><span class="t">e-Way Bills</span></div>
<div class="si" style="top:556px"><svg style="left:24px;top:11px" width="20" height="20" viewBox="0 0 20 20"><g fill="none" stroke="#c9c9c9" stroke-width="1.1" stroke-linejoin="round"><path d="M8.4 6.4 Q9.2 5.3 10.5 5.2 L13.8 5 Q15.5 5 15.5 6.7 V10.9 L8 18.5 L2.2 13.5 Z"/><path d="M13.2 5.2 C13.5 2.8 14.8 2 15.9 2 C17 2 17.8 2.8 17.5 4.6"/></g><circle cx="13" cy="7.9" r="0.9" fill="#c9c9c9"/></svg><span class="t">Reporting Tags</span></div>
<div class="si" style="top:623px"><svg style="left:24px;top:12px" width="20" height="20" viewBox="0 0 20 20"><path d="M10 18.5 C5 18.5 1.5 14.5 1.5 10 C1.5 5 5.5 1.5 10 1.5 C14.5 1.5 18.5 4.5 18.5 8.5 C18.5 11 16.5 11.5 14.5 11.5 C12.5 11.5 12 13 13 14.5 C14 16.5 12.5 18.5 10 18.5 Z" fill="none" stroke="#c9c9c9" stroke-width="1.15"/><circle cx="6" cy="9" r="1.1" fill="#c9c9c9"/><circle cx="8.5" cy="5.5" r="1.1" fill="#c9c9c9"/><circle cx="12.5" cy="5.5" r="1.1" fill="#c9c9c9"/><circle cx="6.5" cy="13" r="1.1" fill="#c9c9c9"/></svg><span class="t">Templates</span></div>
<div class="si" style="top:664px"><svg style="left:24px;top:11px" width="20" height="20" viewBox="0 0 20 20"><path d="M1.5 8 V18.5 H18.5 V8" fill="none" stroke="#c9c9c9" stroke-width="1.15"/><path d="M1.5 8 L10 13.5 L18.5 8" fill="none" stroke="#c9c9c9" stroke-width="1.15"/><path d="M4 9.5 V2 H16 V9.5" fill="none" stroke="#c9c9c9" stroke-width="1.15"/><path d="M6.5 5 H11 M6.5 7.5 H9" stroke="#c9c9c9" stroke-width="1.2"/></svg><span class="t">Emails</span></div>
<div class="si" style="top:705px"><svg style="left:24px;top:12px" width="20" height="18" viewBox="0 0 20 18"><path d="M1.5 1.5 H18.5 V13 H7 L3.5 16.5 V13 H1.5 Z" fill="none" stroke="#c9c9c9" stroke-width="1.15" stroke-linejoin="round"/><text x="10" y="10" text-anchor="middle" font-family="Liberation Sans" font-size="6" fill="#c9c9c9">SMS</text></svg><span class="t">SMS Notifications</span></div>
<div class="si" style="top:746px"><svg style="left:25px;top:12px" width="18" height="20" viewBox="0 0 18 20"><path d="M1.5 15.5 C3 14 3.5 12.5 3.5 9 C3.5 5 6 2.5 9 2.5 C12 2.5 14.5 5 14.5 9 C14.5 12.5 15 14 16.5 15.5 Z" fill="none" stroke="#c9c9c9" stroke-width="1.15" stroke-linejoin="round"/><path d="M7 17 A2 2 0 0 0 11 17 M9 1 V2.5" fill="none" stroke="#c9c9c9" stroke-width="1.2"/></svg><span class="t">Reminders</span></div>
<div class="si" style="top:787px"><svg style="left:24px;top:12px" width="20" height="20" viewBox="0 0 20 20"><g transform="translate(20,0) scale(-1,1)"><path d="M3 7 A7.5 7.5 0 0 1 16.5 5.5" fill="none" stroke="#c9c9c9" stroke-width="1.15"/><path d="M17 13 A7.5 7.5 0 0 1 3.5 14.5" fill="none" stroke="#c9c9c9" stroke-width="1.15"/><path d="M13.5 5.5 H17 V2" fill="none" stroke="#c9c9c9" stroke-width="1.15"/><path d="M6.5 14.5 H3 V18" fill="none" stroke="#c9c9c9" stroke-width="1.15"/></g></svg><span class="t">Automation</span></div>
<div class="si" style="top:854px"><svg style="left:24px;top:13px" width="20" height="20" viewBox="0 0 20 20"><path d="M6 5 L1.5 10 L6 15 M14 5 L18.5 10 L14 15 M11.5 3 L8.5 17" fill="none" stroke="#c9c9c9" stroke-width="1.15"/></svg><span class="t">Developer Space</span></div>
</div>
<svg style="left:1744px;top:49px" width="28" height="12" viewBox="0 0 28 12"><path d="M0 12 L14 0.5 L28 12 Z" fill="#f1f6fd"/><path d="M0 12 L14 0.5 L28 12" fill="none" stroke="#d5d8dc" stroke-width="1"/></svg>
</body></html>
